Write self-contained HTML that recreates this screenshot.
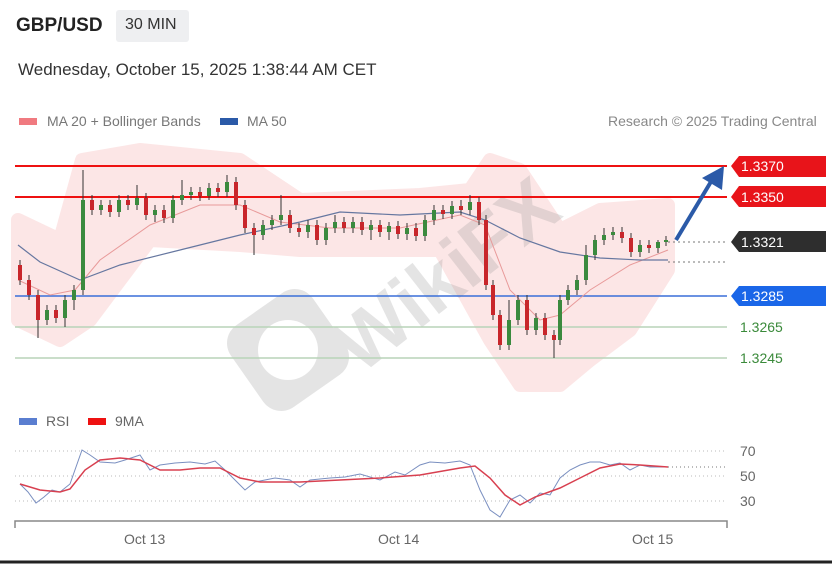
<!DOCTYPE html>
<html><head><meta charset="utf-8"><style>
body{margin:0;width:832px;height:564px;background:#fff;font-family:"Liberation Sans",sans-serif;overflow:hidden;position:relative}
.t{position:absolute;white-space:nowrap}
</style></head><body>
<div class="t" style="left:16px;top:15px;font-size:19px;font-weight:bold;color:#222">GBP/USD</div>
<div class="t" style="left:116px;top:10px;width:73px;height:32px;background:#eeeff1;border-radius:3px"></div>
<div class="t" style="left:125px;top:16px;font-size:16px;color:#333">30 MIN</div>
<div class="t" style="left:18px;top:60px;font-size:17px;color:#333">Wednesday, October 15, 2025 1:38:44 AM CET</div>
<div class="t" style="left:19px;top:118px;width:18px;height:7px;background:#f07a80"></div>
<div class="t" style="left:47px;top:113px;font-size:14px;color:#777">MA 20 + Bollinger Bands</div>
<div class="t" style="left:220px;top:118px;width:18px;height:7px;background:#2b5aa8"></div>
<div class="t" style="left:247px;top:113px;font-size:14px;color:#777">MA 50</div>
<div class="t" style="left:608px;top:113px;font-size:14px;color:#888">Research © 2025 Trading Central</div>

<svg width="832" height="564" style="position:absolute;left:0;top:0">
<polygon fill="#fbdcdc" opacity="0.7" stroke="#fbdcdc" stroke-width="14" stroke-linejoin="round" points="18,220 60,240 82,160 140,150 240,160 300,200 420,195 470,190 490,160 520,170 560,230 600,210 668,205 668,270 630,330 590,360 560,385 520,385 490,340 440,250 300,250 240,245 150,240 90,320 60,340 18,320"/>
<g opacity="0.22" fill="#8a8a8a">
<rect x="238" y="300" width="100" height="100" rx="22" transform="rotate(-35 288 350)"/>
<circle cx="288" cy="350" r="30" fill="#fff"/>
<text x="450" y="300" font-size="78" font-weight="bold" font-family="Liberation Sans" transform="rotate(-38 450 280)" text-anchor="middle">WikiFX</text>
</g>
<line x1="15" y1="166" x2="727" y2="166" stroke="#e11" stroke-width="2"/>
<line x1="15" y1="197" x2="727" y2="197" stroke="#e11" stroke-width="2"/>
<line x1="15" y1="296" x2="727" y2="296" stroke="#3a6fd8" stroke-width="1.5"/>
<line x1="15" y1="327" x2="727" y2="327" stroke="#b8d3b8" stroke-width="1.5"/>
<line x1="15" y1="358" x2="727" y2="358" stroke="#b8d3b8" stroke-width="1.5"/>
<line x1="668" y1="242" x2="727" y2="242" stroke="#777" stroke-dasharray="2,3"/>
<line x1="668" y1="262" x2="727" y2="262" stroke="#777" stroke-dasharray="2,3"/>
<polyline fill="none" stroke="#e89a9a" stroke-width="1" points="18,280 50,295 75,290 100,260 150,225 200,205 240,205 280,222 330,228 400,228 460,215 485,225 510,290 540,320 560,315 590,290 630,265 668,250"/>
<polyline fill="none" stroke="#6677a0" stroke-width="1.2" points="18,245 40,262 80,280 120,265 180,250 240,235 300,222 340,212 400,215 460,212 485,220 520,238 560,252 600,258 640,260 668,260"/>
<g stroke="#333" stroke-width="1">
<path d="M20 260V285M29 275V300M38 290V338M47 305V325M56 305V323M65 295V327M74 285V310M83 170V295M92 195V215M101 200V215M110 200V217M119 195V217M128 195V210M137 185V210M146 193V220M155 205V222M164 205V223M173 195V223M182 180V205M191 187V200M200 187V201M209 183V200M218 183V197M227 175V197M236 177V210M245 200V233M254 223V255M263 220V240M272 215V230M281 195V225M290 210V233M299 223V237M308 220V238M317 220V245M326 223V245M335 215V233M344 217V233M353 217V233M362 217V235M371 220V240M380 220V237M389 222V240M398 221V239M407 223V240M416 223V241M425 215V241M434 205V225M443 205V219M452 201V219M461 200V215M470 195V215M479 197V225M486 215V290M493 280V320M500 310V350M509 300V350M518 295V325M527 295V335M536 313V335M545 313V340M554 330V358M560 295V345M568 285V305M577 275V295M586 245V285M595 235V260M604 228V245M613 227V240M622 227V243M631 233V257M640 240V257M649 240V253M658 240V253M666 236V246"/>
</g>
<g fill="#c8262b">
<rect x="18" y="265" width="4" height="15"/><rect x="27" y="280" width="4" height="15"/><rect x="36" y="295" width="4" height="25"/><rect x="54" y="310" width="4" height="8"/><rect x="90" y="200" width="4" height="10"/><rect x="108" y="205" width="4" height="7"/><rect x="126" y="200" width="4" height="5"/><rect x="144" y="198" width="4" height="17"/><rect x="162" y="210" width="4" height="8"/><rect x="198" y="192" width="4" height="4"/><rect x="216" y="188" width="4" height="4"/><rect x="234" y="182" width="4" height="23"/><rect x="243" y="205" width="4" height="23"/><rect x="252" y="228" width="4" height="7"/><rect x="288" y="215" width="4" height="13"/><rect x="297" y="228" width="4" height="4"/><rect x="315" y="225" width="4" height="15"/><rect x="342" y="222" width="4" height="6"/><rect x="360" y="222" width="4" height="8"/><rect x="378" y="225" width="4" height="7"/><rect x="396" y="226" width="4" height="8"/><rect x="414" y="228" width="4" height="8"/><rect x="441" y="210" width="4" height="4"/><rect x="459" y="206" width="4" height="4"/><rect x="477" y="202" width="4" height="18"/><rect x="484" y="220" width="4" height="65"/><rect x="491" y="285" width="4" height="30"/><rect x="498" y="315" width="4" height="30"/><rect x="525" y="300" width="4" height="30"/><rect x="543" y="318" width="4" height="17"/><rect x="552" y="335" width="4" height="5"/><rect x="620" y="232" width="4" height="6"/><rect x="629" y="238" width="4" height="14"/><rect x="647" y="245" width="4" height="3"/>
</g>
<g fill="#3b8a3e">
<rect x="45" y="310" width="4" height="10"/><rect x="63" y="300" width="4" height="18"/><rect x="72" y="290" width="4" height="10"/><rect x="81" y="200" width="4" height="90"/><rect x="99" y="205" width="4" height="5"/><rect x="117" y="200" width="4" height="12"/><rect x="135" y="198" width="4" height="7"/><rect x="153" y="210" width="4" height="5"/><rect x="171" y="200" width="4" height="18"/><rect x="180" y="195" width="4" height="5"/><rect x="189" y="192" width="4" height="3"/><rect x="207" y="188" width="4" height="8"/><rect x="225" y="182" width="4" height="10"/><rect x="261" y="225" width="4" height="10"/><rect x="270" y="220" width="4" height="5"/><rect x="279" y="215" width="4" height="5"/><rect x="306" y="225" width="4" height="7"/><rect x="324" y="228" width="4" height="12"/><rect x="333" y="222" width="4" height="6"/><rect x="351" y="222" width="4" height="6"/><rect x="369" y="225" width="4" height="5"/><rect x="387" y="226" width="4" height="6"/><rect x="405" y="228" width="4" height="6"/><rect x="423" y="220" width="4" height="16"/><rect x="432" y="210" width="4" height="10"/><rect x="450" y="206" width="4" height="8"/><rect x="468" y="202" width="4" height="8"/><rect x="507" y="320" width="4" height="25"/><rect x="516" y="300" width="4" height="20"/><rect x="534" y="318" width="4" height="12"/><rect x="558" y="300" width="4" height="40"/><rect x="566" y="290" width="4" height="10"/><rect x="575" y="280" width="4" height="10"/><rect x="584" y="255" width="4" height="25"/><rect x="593" y="240" width="4" height="15"/><rect x="602" y="235" width="4" height="5"/><rect x="611" y="232" width="4" height="3"/><rect x="638" y="245" width="4" height="7"/><rect x="656" y="242" width="4" height="6"/><rect x="664" y="240" width="4" height="2"/>
</g>
<line x1="676" y1="240" x2="712" y2="180" stroke="#2b5aa8" stroke-width="4"/>
<polygon fill="#2b5aa8" points="724,166 722,190 702,178"/>
<polygon fill="#e8141a" points="739,156 826,156 826,177 739,177 731,166"/>
<polygon fill="#e8141a" points="739,186 826,186 826,207 739,207 731,197"/>
<polygon fill="#2e2e2e" points="739,231 826,231 826,252 739,252 731,242"/>
<polygon fill="#1a66e8" points="739,286 826,286 826,306 739,306 731,296"/>
<g font-family="Liberation Sans" font-size="14">
<text x="741" y="171" fill="#fff">1.3370</text>
<text x="741" y="202" fill="#fff">1.3350</text>
<text x="741" y="247" fill="#fff">1.3321</text>
<text x="741" y="301" fill="#fff">1.3285</text>
<text x="740" y="332" fill="#3a8a3a">1.3265</text>
<text x="740" y="363" fill="#3a8a3a">1.3245</text>
</g>
<rect x="19" y="418" width="18" height="7" fill="#5a7ed0"/>
<text x="46" y="426" font-family="Liberation Sans" font-size="14" fill="#666">RSI</text>
<rect x="88" y="418" width="18" height="7" fill="#e11"/>
<text x="115" y="426" font-family="Liberation Sans" font-size="14" fill="#666">9MA</text>
<g stroke="#bbb" stroke-dasharray="1,3">
<line x1="15" y1="451" x2="727" y2="451"/><line x1="15" y1="476" x2="727" y2="476"/><line x1="15" y1="501" x2="727" y2="501"/><line x1="668" y1="467" x2="727" y2="467" stroke="#777"/>
</g>
<g font-family="Liberation Sans" font-size="14" fill="#666">
<text x="740" y="456">70</text><text x="740" y="481">50</text><text x="740" y="506">30</text>
<text x="124" y="544">Oct 13</text><text x="378" y="544">Oct 14</text><text x="632" y="544">Oct 15</text>
</g>
<polyline fill="none" stroke="#7a8fc0" stroke-width="1" points="20,484 28,492 36,503 44,497 52,490 60,492 70,484 82,450 90,455 100,462 115,463 125,460 140,455 150,470 160,465 175,463 190,462 205,464 215,461 225,470 235,480 245,490 255,482 275,478 290,480 300,487 310,480 330,478 345,477 360,474 380,480 395,472 405,475 420,465 430,462 445,463 460,461 470,465 480,490 490,510 500,517 510,500 520,495 530,503 540,493 550,495 560,478 570,470 580,465 590,462 600,462 610,465 620,463 630,470 640,465 650,467 668,467"/>
<polyline fill="none" stroke="#d84050" stroke-width="1.5" points="20,484 40,490 60,492 70,489 85,470 100,460 120,458 140,460 160,470 180,470 200,468 220,468 240,478 260,482 300,482 340,480 380,478 420,475 460,468 475,466 490,478 505,495 520,505 535,497 560,488 580,478 600,468 620,464 640,465 668,467"/>
<path d="M15 528V521H727V528" fill="none" stroke="#888" stroke-width="1.5"/>
<line x1="0" y1="562" x2="832" y2="562" stroke="#222" stroke-width="3"/>
</svg>
</body></html>
